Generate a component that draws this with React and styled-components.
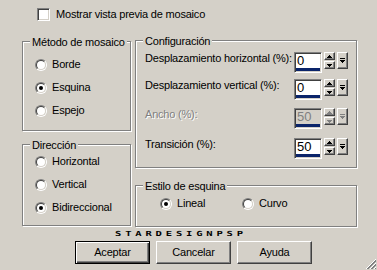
import React from "react";
import styled, { createGlobalStyle } from "styled-components";

const GlobalStyle = createGlobalStyle`
  html, body {
    margin: 0;
    padding: 0;
    background: #d4d0c8;
  }
`;

const ROWS = [
  { label: "Desplazamiento horizontal (%):", value: "0", top: 11 },
  { label: "Desplazamiento vertical (%):", value: "0", top: 6 },
  { label: "Ancho (%):", value: "50", top: 8, disabled: true },
  { label: "Transición (%):", value: "50", top: 9 },
];

const Radio = ({ checked, children }) => (
  <RadioRow>
    <RadioOuter>
      <RadioInner $checked={checked} />
    </RadioOuter>
    <span>{children}</span>
  </RadioRow>
);

const Arrow = ({ up, color }) => (
  <svg width="5" height="3" viewBox="0 0 5 3" shapeRendering="crispEdges">
    <polygon points={up ? "2.5,0 5,3 0,3" : "0,0 5,0 2.5,3"} fill={color} />
  </svg>
);

const Spinner = ({ value, disabled }) => {
  const color = disabled ? "#808080" : "#000";
  return (
    <SpinGroup>
      <Field $disabled={disabled}>
        <FieldText $disabled={disabled}>{value}</FieldText>
        <FieldBar />
      </Field>
      <SpinColumn>
        <SmallButton>
          <Arrow up color={color} />
        </SmallButton>
        <SmallButton>
          <Arrow color={color} />
        </SmallButton>
      </SpinColumn>
      <DropButton>
        <svg width="5" height="6" viewBox="0 0 5 6" shapeRendering="crispEdges">
          <rect x="0" y="0" width="5" height="1" fill={color} />
          <polygon points="0,2 5,2 2.5,5" fill={color} />
        </svg>
      </DropButton>
    </SpinGroup>
  );
};

export default function App() {
  return (
    <Dialog>
      <GlobalStyle />
      <CheckRow>
        <CheckBox />
        <span>Mostrar vista previa de mosaico</span>
      </CheckRow>

      <Main>
        <LeftColumn>
          <GroupBox $h={90}>
            <Legend>Método de mosaico</Legend>
            <RadioList $top={11}>
              <Radio>Borde</Radio>
              <Radio checked>Esquina</Radio>
              <Radio>Espejo</Radio>
            </RadioList>
          </GroupBox>
          <GroupBox $h={82}>
            <Legend>Dirección</Legend>
            <RadioList $top={5}>
              <Radio>Horizontal</Radio>
              <Radio>Vertical</Radio>
              <Radio checked>Bidireccional</Radio>
            </RadioList>
          </GroupBox>
        </LeftColumn>

        <RightColumn>
          <GroupBox $h={128}>
            <Legend>Configuración</Legend>
            <SettingsList>
              {ROWS.map((row) => (
                <SettingRow key={row.label} $top={row.top}>
                  <SettingLabel $disabled={row.disabled}>{row.label}</SettingLabel>
                  <Spinner value={row.value} disabled={row.disabled} />
                </SettingRow>
              ))}
            </SettingsList>
          </GroupBox>
          <GroupBox $h={42}>
            <Legend>Estilo de esquina</Legend>
            <CornerRow>
              <CornerItem>
                <Radio checked>Lineal</Radio>
              </CornerItem>
              <Radio>Curvo</Radio>
            </CornerRow>
          </GroupBox>
        </RightColumn>
      </Main>

      <Watermark>STARDESIGNPSP</Watermark>

      <ButtonRow>
        <Button $default>Aceptar</Button>
        <Button>Cancelar</Button>
        <Button>Ayuda</Button>
      </ButtonRow>

      <SizeGrip width="12" height="12" viewBox="0 0 12 12" shapeRendering="crispEdges">
        <path d="M11 1 L1 11 M11 5 L5 11 M11 9 L9 11" stroke="#fff" strokeWidth="1" />
        <path d="M11 2 L2 11 M11 3 L3 11 M11 6 L6 11 M11 7 L7 11 M11 10 L10 11" stroke="#808080" strokeWidth="1" />
      </SizeGrip>
    </Dialog>
  );
}

const Dialog = styled.div`
  position: relative;
  width: 377px;
  height: 270px;
  overflow: hidden;
  background: #d4d0c8;
  font-family: "Liberation Sans", Arial, sans-serif;
  font-size: 11px;
  line-height: 13px;
  letter-spacing: -0.2px;
  color: #000;
`;

const CheckRow = styled.div`
  display: flex;
  align-items: center;
  gap: 6px;
  height: 13px;
  padding: 8px 0 0 37px;
`;

const CheckBox = styled.span`
  box-sizing: border-box;
  width: 13px;
  height: 13px;
  border: 1px solid;
  border-color: #808080 #fff #fff #808080;
  background: #fff;
  box-shadow: inset 1px 1px 0 #404040, inset -1px -1px 0 #d4d0c8;
`;

const Main = styled.div`
  display: flex;
  gap: 4px;
  margin: 19px 0 0 22px;
`;

const LeftColumn = styled.div`
  display: flex;
  flex-direction: column;
  gap: 13px;
  width: 109px;
  padding-top: 1px;
`;

const RightColumn = styled.div`
  display: flex;
  flex-direction: column;
  gap: 17px;
  width: 222px;
`;

const GroupBox = styled.div`
  position: relative;
  box-sizing: border-box;
  height: ${(p) => p.$h}px;
  border: 1px solid #808080;
  box-shadow: 1px 1px 0 #fff, inset 1px 1px 0 #fff;
`;

const Legend = styled.span`
  position: absolute;
  top: -6px;
  left: 7px;
  padding: 0 2px;
  background: #d4d0c8;
  white-space: nowrap;
`;

const RadioList = styled.div`
  display: flex;
  flex-direction: column;
  padding: ${(p) => p.$top}px 0 0 12px;
`;

const RadioRow = styled.label`
  display: flex;
  align-items: center;
  gap: 5px;
  height: 23px;
  white-space: nowrap;
`;

const RadioOuter = styled.span`
  box-sizing: border-box;
  display: flex;
  flex: none;
  width: 12px;
  height: 12px;
  border-radius: 50%;
  border: 1px solid;
  border-color: #808080 #fff #fff #808080;
`;

const RadioInner = styled.span`
  box-sizing: border-box;
  display: flex;
  align-items: center;
  justify-content: center;
  flex: 1;
  border-radius: 50%;
  border: 1px solid;
  border-color: #404040 #d4d0c8 #d4d0c8 #404040;
  background: #fff;

  &::after {
    content: "";
    display: ${(p) => (p.$checked ? "block" : "none")};
    width: 4px;
    height: 4px;
    border-radius: 50%;
    background: #000;
  }
`;

const SettingsList = styled.div`
  display: flex;
  flex-direction: column;
  padding: 0 8px 0 9px;
`;

const SettingRow = styled.div`
  display: flex;
  align-items: flex-start;
  height: 21px;
  margin-top: ${(p) => p.$top}px;
`;

const SettingLabel = styled.span`
  flex: 1;
  white-space: nowrap;
  color: ${(p) => (p.$disabled ? "#808080" : "#000")};
  text-shadow: ${(p) => (p.$disabled ? "1px 1px 0 #fff" : "none")};
`;

const SpinGroup = styled.div`
  display: flex;
  align-items: flex-start;
  gap: 2px;
`;

const Field = styled.div`
  box-sizing: border-box;
  display: flex;
  flex-direction: column;
  width: 28px;
  height: 21px;
  padding: 1px;
  border: 1px solid;
  border-color: #808080 #fff #fff #808080;
  box-shadow: inset 1px 1px 0 #404040, inset -1px -1px 0 #d4d0c8;
  background: ${(p) => (p.$disabled ? "#d4d0c8" : "#fff")};
`;

const FieldText = styled.span`
  font-size: 13px;
  line-height: 13px;
  letter-spacing: 0;
  padding-left: 1px;
  color: ${(p) => (p.$disabled ? "#808080" : "#000")};
`;

const FieldBar = styled.span`
  margin-top: auto;
  height: 3px;
  background: #0a246a;
`;

const SpinColumn = styled.div`
  display: flex;
  flex-direction: column;
  gap: 1px;
`;

const SmallButton = styled.span`
  box-sizing: border-box;
  display: flex;
  align-items: center;
  justify-content: center;
  width: 11px;
  height: 8px;
  border: 1px solid;
  border-color: #fff #404040 #404040 #fff;
  box-shadow: inset -1px -1px 0 #808080;
  background: #d4d0c8;
`;

const DropButton = styled(SmallButton)`
  height: 17px;
`;

const CornerRow = styled.div`
  display: flex;
  padding: 6px 0 0 24px;
`;

const CornerItem = styled.div`
  width: 82px;
`;

const Watermark = styled.div`
  height: 7px;
  margin: 4px 0 0 115px;
  font-family: "DejaVu Sans Mono", monospace;
  font-weight: bold;
  font-size: 7px;
  line-height: 7px;
  letter-spacing: 2.55px;
  white-space: nowrap;
  transform: scaleX(1.5);
  transform-origin: left center;
`;

const ButtonRow = styled.div`
  display: flex;
  gap: 6px;
  margin-top: 3px;
  padding-left: 75px;
`;

const Button = styled.button`
  box-sizing: border-box;
  width: 75px;
  height: 23px;
  padding: 0;
  font: inherit;
  letter-spacing: inherit;
  color: #000;
  background: #d4d0c8;
  border: 1px solid;
  border-color: ${(p) => (p.$default ? "#000" : "#fff #404040 #404040 #fff")};
  box-shadow: ${(p) =>
    p.$default
      ? "inset 1px 1px 0 #fff, inset -1px -1px 0 #404040, inset -2px -2px 0 #808080"
      : "inset -1px -1px 0 #808080"};
`;

const SizeGrip = styled.svg`
  position: absolute;
  right: 0;
  bottom: 0;
`;
